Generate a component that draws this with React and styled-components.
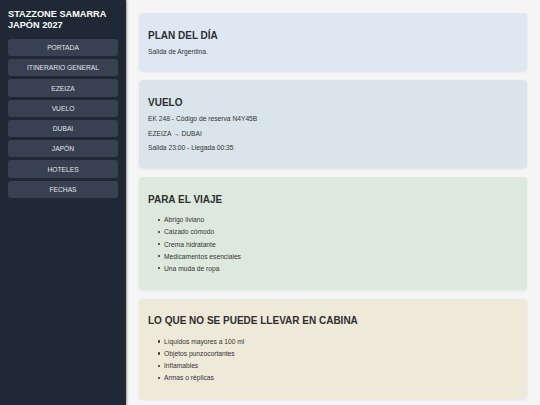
import React from 'react';
import styled, { createGlobalStyle } from 'styled-components';

const GlobalStyle = createGlobalStyle`
  html, body {
    margin: 0;
    padding: 0;
    background: #f5f5f5;
    font-family: "Liberation Sans", Arial, sans-serif;
  }
`

const Layout = styled.div`
  display: flex;
  height: 100vh;
  overflow: hidden;
`

const Sidebar = styled.aside`
  width: 126px;
  flex-shrink: 0;
  box-sizing: border-box;
  padding: 8.7px 8px 8px;
  background: #1f2936;
  box-shadow: 1px 0 2px rgba(0, 0, 0, 0.35);
  z-index: 1;
`

const Brand = styled.h1`
  margin: 0 0 6.9px;
  color: #ffffff;
  font-size: 9.2px;
  line-height: 11.7px;
  font-weight: 700;
`

const Nav = styled.nav`
  display: flex;
  flex-direction: column;
  gap: 3px;
`

const NavButton = styled.button`
  height: 17.25px;
  padding: 0;
  border: none;
  border-radius: 3px;
  background: #374151;
  color: #e2e5ea;
  font-family: inherit;
  font-size: 6.7px;
  text-align: center;
  cursor: pointer;
`

const Main = styled.main`
  flex: 1;
  box-sizing: border-box;
  padding: 13px 13px 0;
  display: flex;
  flex-direction: column;
  gap: 9px;
  overflow: hidden;
`

const Card = styled.section`
  flex-shrink: 0;
  box-sizing: border-box;
  padding: 9px 9px 9px;
  border-radius: 4px;
  background: ${p => p.$bg};
  box-shadow: 0 1px 3px rgba(0, 0, 0, 0.08);
  color: #333333;
`

const CardTitle = styled.h2`
  margin: 7.5px 0 0;
  font-size: 10px;
  line-height: 11.5px;
  font-weight: 700;
  color: #2e2e2e;
`

const Text = styled.p`
  margin: 6.7px 0;
  font-size: 6.7px;
  line-height: 8px;
`

const List = styled.ul`
  margin: 9.2px 0 5.8px;
  padding-left: 16px;
  list-style: none;
  font-size: 6.7px;
`

const Item = styled.li`
  line-height: 12.1px;

  &::before {
    content: "";
    display: inline-block;
    width: 2.2px;
    height: 2.2px;
    margin: 0 4px 1.2px -6.2px;
    border-radius: 50%;
    background: #333333;
    vertical-align: middle;
  }
`

const sections = ['PORTADA', 'ITINERARIO GENERAL', 'EZEIZA', 'VUELO', 'DUBAI', 'JAPÓN', 'HOTELES', 'FECHAS']

const viaje = ['Abrigo liviano', 'Calzado cómodo', 'Crema hidratante', 'Medicamentos esenciales', 'Una muda de ropa']

const cabina = ['Líquidos mayores a 100 ml', 'Objetos punzocortantes', 'Inflamables', 'Armas o réplicas']

function App () {
  return (
    <>
      <GlobalStyle />
      <Layout>
        <Sidebar>
          <Brand>STAZZONE SAMARRA<br />JAPÓN 2027</Brand>
          <Nav>
            {sections.map(s => <NavButton key={s}>{s}</NavButton>)}
          </Nav>
        </Sidebar>
        <Main>
          <Card $bg="#dde8f3">
            <CardTitle>PLAN DEL DÍA</CardTitle>
            <Text>Salida de Argentina.</Text>
          </Card>
          <Card $bg="#d9e5ea">
            <CardTitle>VUELO</CardTitle>
            <Text>EK 248 - Código de reserva N4Y45B</Text>
            <Text>EZEIZA → DUBAI</Text>
            <Text>Salida 23:00 - Llegada 00:35</Text>
          </Card>
          <Card $bg="#dee9de">
            <CardTitle>PARA EL VIAJE</CardTitle>
            <List>
              {viaje.map(v => <Item key={v}>{v}</Item>)}
            </List>
          </Card>
          <Card $bg="#efe9da">
            <CardTitle>LO QUE NO SE PUEDE LLEVAR EN CABINA</CardTitle>
            <List>
              {cabina.map(c => <Item key={c}>{c}</Item>)}
            </List>
          </Card>
        </Main>
      </Layout>
    </>
  )
}

export default App;
